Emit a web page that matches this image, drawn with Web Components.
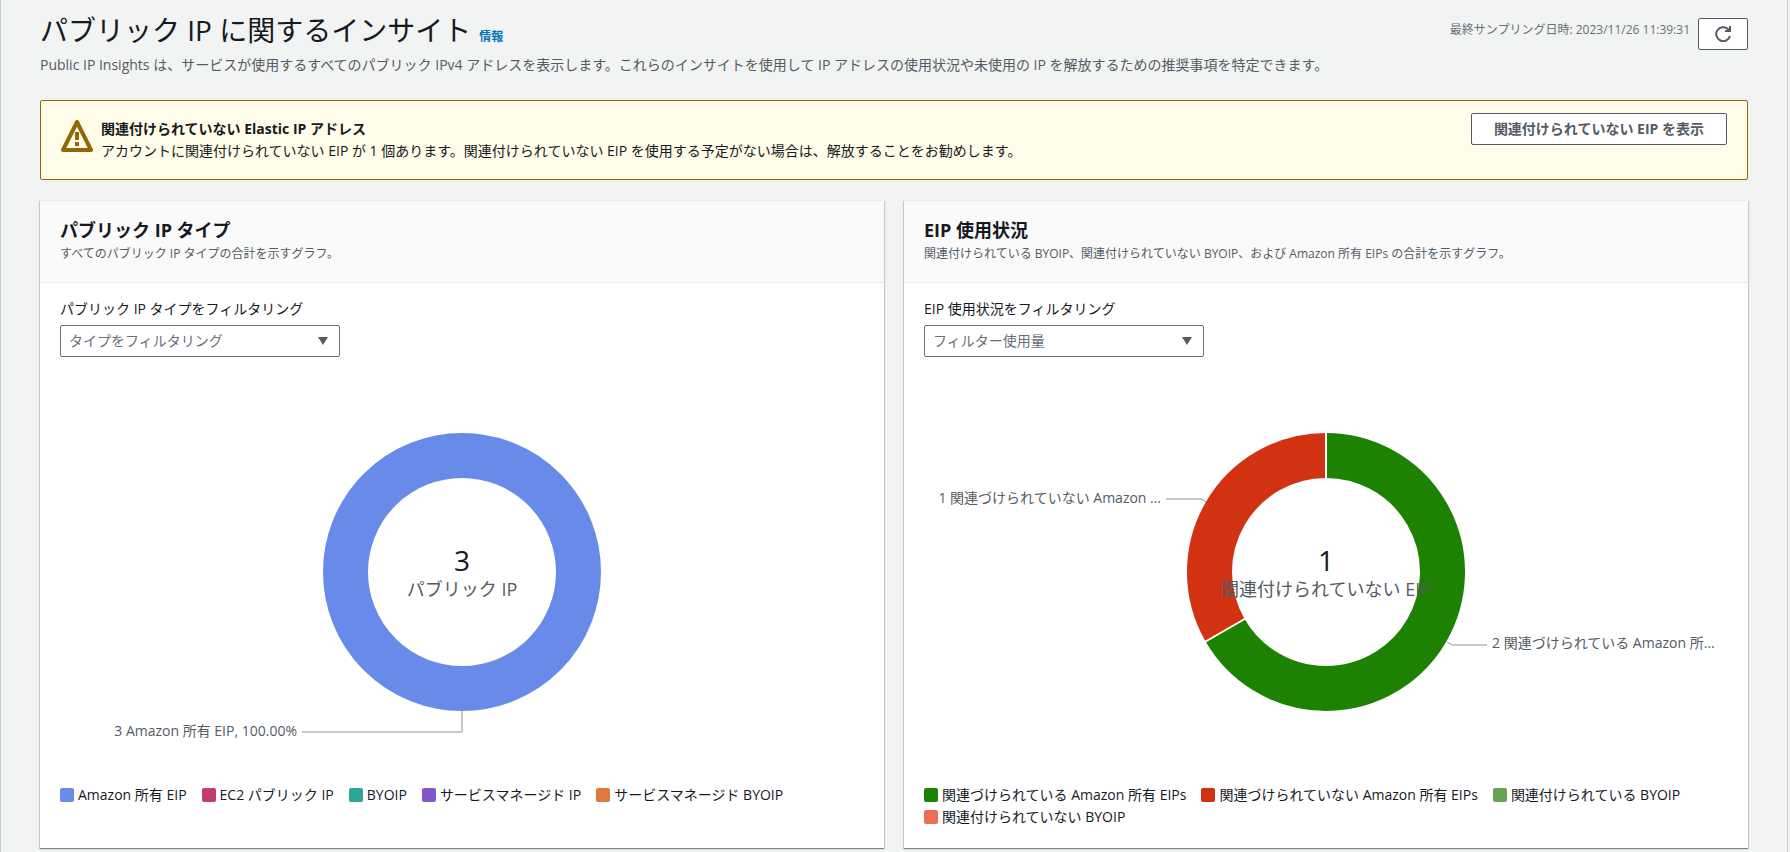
<!DOCTYPE html>
<html lang="ja">
<head>
<meta charset="utf-8">
<meta name="viewport" content="width=device-width, initial-scale=1">
<title>パブリック IP に関するインサイト</title>
<style>
  html { background: #f2f3f3; }
  body {
    margin: 0;
    font-family: "Open Sans", "Noto Sans CJK JP", sans-serif;
    font-size: 14px;
    line-height: 22px;
    color: #16191f;
  }
</style>
</head>
<body>
<insights-page>
  <page-header heading="パブリック IP に関するインサイト" info="情報">
    Public IP Insights は、サービスが使用するすべてのパブリック IPv4 アドレスを表示します。これらのインサイトを使用して IP アドレスの使用状況や未使用の IP を解放するための推奨事項を特定できます。
    <span slot="sampled">最終サンプリング日時: 2023/11/26 11:39:31</span>
  </page-header>
  <warning-alert heading="関連付けられていない Elastic IP アドレス">
    アカウントに関連付けられていない EIP が 1 個あります。関連付けられていない EIP を使用する予定がない場合は、解放することをお勧めします。
    <action-button slot="action">関連付けられていない EIP を表示</action-button>
  </warning-alert>
  <card-grid>
    <chart-card heading="パブリック IP タイプ" description="すべてのパブリック IP タイプの合計を示すグラフ。">
      <filter-select label="パブリック IP タイプをフィルタリング" placeholder="タイプをフィルタリング"></filter-select>
      <donut-chart id="types" value="3" caption="パブリック IP"></donut-chart>
      <chart-legend>
        <legend-item color="#688ae8">Amazon 所有 EIP</legend-item>
        <legend-item color="#c33d69">EC2 パブリック IP</legend-item>
        <legend-item color="#2ea597">BYOIP</legend-item>
        <legend-item color="#8456ce">サービスマネージド IP</legend-item>
        <legend-item color="#e07941">サービスマネージド BYOIP</legend-item>
      </chart-legend>
    </chart-card>
    <chart-card heading="EIP 使用状況" description="関連付けられている BYOIP、関連付けられていない BYOIP、および Amazon 所有 EIPs の合計を示すグラフ。">
      <filter-select label="EIP 使用状況をフィルタリング" placeholder="フィルター使用量"></filter-select>
      <donut-chart id="usage" value="1" caption="関連付けられていない EIP"></donut-chart>
      <chart-legend>
        <legend-item color="#1d8102">関連づけられている Amazon 所有 EIPs</legend-item>
        <legend-item color="#d13212">関連づけられていない Amazon 所有 EIPs</legend-item>
        <legend-item color="#67a353">関連付けられている BYOIP</legend-item>
        <legend-item color="#eb6f57">関連付けられていない BYOIP</legend-item>
      </chart-legend>
    </chart-card>
  </card-grid>
</insights-page>

<script>
  class BaseElement extends HTMLElement {
    connectedCallback() {
      if (this.shadowRoot) return;
      this.attachShadow({ mode: "open" }).innerHTML = this.render();
    }
    attr(name) { return this.getAttribute(name) || ""; }
  }

  customElements.define("insights-page", class extends BaseElement {
    render() {
      return `<style>
        :host { display: block; box-sizing: border-box; min-height: 100vh; margin-right: 2px;
          padding: 12px 39px 0; border: solid #c8cccc; border-width: 0 1px; }
      </style><main><slot></slot></main>`;
    }
  });

  customElements.define("page-header", class extends BaseElement {
    render() {
      return `<style>
        :host { display: block; margin-bottom: 24px; }
        header { display: flex; align-items: flex-start; justify-content: space-between; gap: 16px; min-height: 42px; }
        .title { display: flex; align-items: baseline; gap: 8px; }
        h1 { margin: 0; font-size: 28px; line-height: 36px; font-weight: 400; }
        a { font-size: 12px; font-weight: 700; color: #0073bb; text-decoration: none; }
        p { margin: 0; color: #545b64; }
        .actions { display: flex; gap: 8px; padding-top: 6px; white-space: nowrap; }
        .sampled { font-size: 12px; line-height: 24px; color: #687078; }
      </style>
      <header>
        <div class="title"><h1>${this.attr("heading")}</h1><a href="#info">${this.attr("info")}</a></div>
        <div class="actions"><span class="sampled"><slot name="sampled"></slot></span><refresh-button></refresh-button></div>
      </header>
      <p><slot></slot></p>`;
    }
  });

  customElements.define("refresh-button", class extends BaseElement {
    render() {
      return `<style>
        :host { display: block; height: 32px; margin-bottom: -8px; }
        button { display: flex; align-items: center; justify-content: center; box-sizing: border-box;
          width: 50px; height: 32px; padding: 0; background: #fff; border: 1px solid #545b64; border-radius: 2px; }
        svg { display: block; fill: none; stroke: #545b64; stroke-width: 2; }
      </style>
      <button type="button" aria-label="更新"><svg width="16" height="16" viewBox="0 0 16 16"><path d="M15 10a7 7 0 1 1-2-7l2 2"/><path d="M15 0v5h-5"/></svg></button>`;
    }
  });

  customElements.define("action-button", class extends BaseElement {
    render() {
      return `<style>
        :host { display: block; }
        button { height: 32px; padding: 0 22px; background: #fff; border: 1px solid #545b64; border-radius: 2px;
          font: inherit; font-weight: 700; color: #545b64; white-space: nowrap; }
      </style><button type="button"><slot></slot></button>`;
    }
  });

  customElements.define("warning-alert", class extends BaseElement {
    render() {
      return `<style>
        :host { display: flex; align-items: flex-start; gap: 8px; padding: 12px 20px; margin-bottom: 20px;
          background: #fffce9; border: 1px solid #906806; border-radius: 2px; }
        svg { flex: none; margin-top: 7px; }
        div { flex: 1; padding: 5px 0; }
        strong { display: block; }
      </style>
      <svg width="32" height="32" viewBox="0 0 32 32" role="img" aria-label="警告">
        <path d="M16 2 30 30H2Z" fill="none" stroke="#906806" stroke-width="4" stroke-linejoin="round"/>
        <path d="M16 12v8M16 22v4" fill="none" stroke="#906806" stroke-width="4"/>
      </svg>
      <div><strong>${this.attr("heading")}</strong><slot></slot></div>
      <slot name="action"></slot>`;
    }
  });

  customElements.define("card-grid", class extends BaseElement {
    render() {
      return `<style>
        :host { display: grid; grid-template-columns: repeat(auto-fit, minmax(min(560px, 100%), 1fr)); gap: 20px; }
      </style><slot></slot>`;
    }
  });

  customElements.define("chart-card", class extends BaseElement {
    render() {
      return `<style>
        :host { display: block; background: #fff; border-top: 1px solid #eaeded;
          box-shadow: 0 1px 1px rgba(0,28,36,.3), 1px 1px 1px rgba(0,28,36,.15), -1px 1px 1px rgba(0,28,36,.15); }
        header { padding: 16px 20px 17px; background: #fafafa; border-bottom: 1px solid #eaeded; }
        h2 { margin: 0; font-size: 18px; line-height: 26px; }
        p { margin: 0; font-size: 12px; line-height: 22px; color: #545b64; }
        section { padding: 15px 20px 20px; }
      </style>
      <header><h2>${this.attr("heading")}</h2><p>${this.attr("description")}</p></header>
      <section><slot></slot></section>`;
    }
  });

  customElements.define("filter-select", class extends BaseElement {
    render() {
      return `<style>
        :host { display: block; }
        label { display: block; margin-bottom: 5px; }
        .field { display: grid; grid-template-columns: minmax(0, 280px); align-items: center; }
        select, svg { grid-area: 1 / 1; }
        select { appearance: none; height: 32px; padding: 0 32px 0 8px; background: #fff;
          border: 1px solid #687078; border-radius: 2px; font: inherit; color: #687078; }
        svg { justify-self: end; margin-right: 12px; pointer-events: none; }
      </style>
      <label for="filter">${this.attr("label")}</label>
      <div class="field">
        <select id="filter"><option>${this.attr("placeholder")}</option></select>
        <svg width="10" height="8" viewBox="0 0 10 8"><path d="M0 0h10L5 8Z" fill="#545b64"/></svg>
      </div>`;
    }
  });

  // Segment and callout geometry, measured from the centre of each ring.
  const charts = {
    types: {
      ring: `<circle r="116.5" fill="none" stroke="#688ae8" stroke-width="45"/>`,
      leaders: `<path d="M0 139V160H-160"/>`,
      labels: `<text x="-165" y="164" text-anchor="end">3 Amazon 所有 EIP, 100.00%</text>`
    },
    usage: {
      ring: `<path d="M0-116.5A116.5 116.5 0 1 1-100.9 58.25" fill="none" stroke="#1d8102" stroke-width="45"/>
        <path d="M-100.9 58.25A116.5 116.5 0 0 1 0-116.5" fill="none" stroke="#d13212" stroke-width="45"/>
        <path d="M0-93V-140M-80.5 46.5-121.2 70" fill="none" stroke="#fff" stroke-width="2"/>`,
      leaders: `<path d="M-120-70-124-73H-160"/><path d="M121 70 126 73H161"/>`,
      labels: `<text x="-165" y="-69" text-anchor="end">1 関連づけられていない Amazon …</text>
        <text x="166" y="76">2 関連づけられている Amazon 所…</text>`
    }
  };

  customElements.define("donut-chart", class extends BaseElement {
    render() {
      const chart = charts[this.id];
      return `<style>
        :host { display: block; }
        svg { display: block; overflow: visible; }
        text { font-size: 14px; fill: #545b64; }
        .leaders { fill: none; stroke: #879596; stroke-width: 1; }
        .value { font-size: 28px; fill: #16191f; text-anchor: middle; }
        .caption { font-size: 18px; text-anchor: middle; }
      </style>
      <svg width="100%" height="427" role="img" aria-label="${this.attr("caption")} ${this.attr("value")}">
        <svg x="50%" y="215">
          <g class="leaders">${chart.leaders}</g>${chart.ring}${chart.labels}
          <text class="value" y="-1">${this.attr("value")}</text>
          <text class="caption" y="24">${this.attr("caption")}</text>
        </svg>
      </svg>`;
    }
  });

  customElements.define("chart-legend", class extends BaseElement {
    render() {
      return `<style>:host { display: flex; flex-wrap: wrap; column-gap: 15px; }</style><slot></slot>`;
    }
  });

  customElements.define("legend-item", class extends BaseElement {
    render() {
      return `<style>
        :host { display: flex; align-items: center; gap: 4px; white-space: nowrap; }
        i { width: 14px; height: 14px; border-radius: 2px; background: ${this.attr("color")}; }
      </style><i></i><span><slot></slot></span>`;
    }
  });
</script>
</body>
</html>
